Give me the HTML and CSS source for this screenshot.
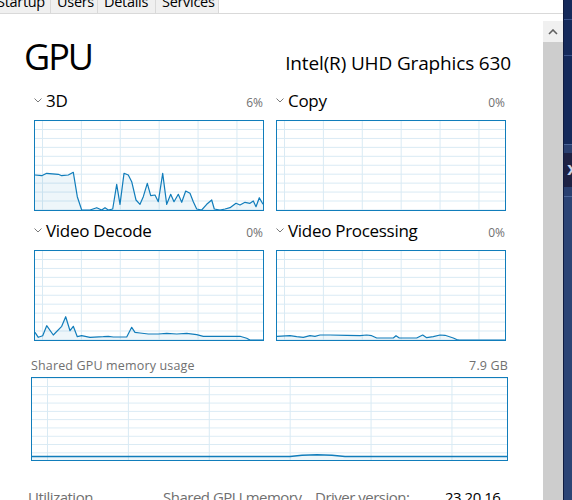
FILE: index.html
```html
<!DOCTYPE html>
<html>
  <head>
    <meta charset="UTF-8" />
    <title>Task Manager - GPU</title>
    <link rel="stylesheet" href="styles.css">
  </head>
  <body>
    <div class="window">
      <div class="main">
        <!-- Tab strip (scrolled partly out of view) -->
        <div class="tabs">
          <div class="tab tab-startup">Startup</div>
          <div class="tab tab-users">Users</div>
          <div class="tab tab-details">Details</div>
          <div class="tab tab-services">Services</div>
        </div>

        <div class="body">
          <div class="content">
            <div class="title-row">
              <h1 class="title">GPU</h1>
              <div class="gpu-name">Intel(R) UHD Graphics 630</div>
            </div>

            <div class="engines">
              <div class="engine">
                <div class="engine-head">
                  <span class="engine-name"><svg class="chev" width="8" height="5" viewBox="0 0 8 5"><polyline points="0.5,0.5 4,4 7.5,0.5" /></svg>3D</span>
                  <span class="pct">6%</span>
                </div>
                <div class="graph">
                  <svg width="228" height="89" viewBox="0 0 228 89">
                    <polygon class="area" points="0,54 6.7,54.7 11.7,52.3 23.3,53.3 26.7,54.7 33.3,54 38.3,51.3 42.3,75.7 46.7,89 55,89 61.7,86.7 66.7,89 70,86.7 73.3,89 77.7,88 81.7,63.3 85,83.3 89,52.3 93.3,54 96.7,60.7 101,79 105,83.3 108.3,75.7 112.3,62.3 115.7,74.7 120,74 123.3,80.7 127.7,52.3 131.7,83.3 135.7,73.3 139,80.7 143.3,73.3 146.7,81.3 150.7,70 155,72.3 158.3,80.7 161.7,88 166.7,89 171.7,83.3 176.7,79 179.3,88 185,89 190,88 195,86.7 201,82.3 205,84 210,81.3 215,82.3 218.3,80 221,85.7 224.3,76.7 228,83.3 228,89 0,89" />
                    <polyline class="line" points="0,54 6.7,54.7 11.7,52.3 23.3,53.3 26.7,54.7 33.3,54 38.3,51.3 42.3,75.7 46.7,89 55,89 61.7,86.7 66.7,89 70,86.7 73.3,89 77.7,88 81.7,63.3 85,83.3 89,52.3 93.3,54 96.7,60.7 101,79 105,83.3 108.3,75.7 112.3,62.3 115.7,74.7 120,74 123.3,80.7 127.7,52.3 131.7,83.3 135.7,73.3 139,80.7 143.3,73.3 146.7,81.3 150.7,70 155,72.3 158.3,80.7 161.7,88 166.7,89 171.7,83.3 176.7,79 179.3,88 185,89 190,88 195,86.7 201,82.3 205,84 210,81.3 215,82.3 218.3,80 221,85.7 224.3,76.7 228,83.3" />
                  </svg>
                </div>
              </div>

              <div class="engine">
                <div class="engine-head">
                  <span class="engine-name"><svg class="chev" width="8" height="5" viewBox="0 0 8 5"><polyline points="0.5,0.5 4,4 7.5,0.5" /></svg>Copy</span>
                  <span class="pct">0%</span>
                </div>
                <div class="graph"></div>
              </div>

              <div class="engine">
                <div class="engine-head">
                  <span class="engine-name"><svg class="chev" width="8" height="5" viewBox="0 0 8 5"><polyline points="0.5,0.5 4,4 7.5,0.5" /></svg>Video Decode</span>
                  <span class="pct">0%</span>
                </div>
                <div class="graph">
                  <svg width="228" height="89" viewBox="0 0 228 89">
                    <polygon class="area" points="0,81.3 3.3,86.3 7.7,84.7 11.7,74.7 18.3,84 26.7,75.3 30.7,65.7 35,79.7 38.3,75.3 42.3,85.7 46.7,84.7 55,86.3 68.3,85.7 73.3,85.3 78.3,86 91.7,86 96.7,76.3 100,81.3 105,82 113.3,83 123.3,83 131.7,82.3 141.7,83 151.7,82.3 161.7,83.7 168.3,85.3 185,85.3 205,85.3 211.7,87.3 215,89 228,89 0,89" />
                    <polyline class="line" points="0,81.3 3.3,86.3 7.7,84.7 11.7,74.7 18.3,84 26.7,75.3 30.7,65.7 35,79.7 38.3,75.3 42.3,85.7 46.7,84.7 55,86.3 68.3,85.7 73.3,85.3 78.3,86 91.7,86 96.7,76.3 100,81.3 105,82 113.3,83 123.3,83 131.7,82.3 141.7,83 151.7,82.3 161.7,83.7 168.3,85.3 185,85.3 205,85.3 211.7,87.3 215,89 228,89" />
                  </svg>
                </div>
              </div>

              <div class="engine">
                <div class="engine-head">
                  <span class="engine-name"><svg class="chev" width="8" height="5" viewBox="0 0 8 5"><polyline points="0.5,0.5 4,4 7.5,0.5" /></svg>Video Processing</span>
                  <span class="pct">0%</span>
                </div>
                <div class="graph">
                  <svg width="228" height="89" viewBox="0 0 228 89">
                    <polygon class="area" points="0,85.3 13,84.7 19.7,85.7 26.3,86.3 33,84.7 38,85.3 43,84 53,84 69.7,84.3 83,84.7 89.7,84 94.7,84.7 99.7,87 116.3,87 119,84.7 122.3,87 139.7,87 145.7,84 149.7,86.7 156.3,85.7 163,84 168,84.3 176.3,87 179.7,88.5 182,89 228,89 0,89" />
                    <polyline class="line" points="0,85.3 13,84.7 19.7,85.7 26.3,86.3 33,84.7 38,85.3 43,84 53,84 69.7,84.3 83,84.7 89.7,84 94.7,84.7 99.7,87 116.3,87 119,84.7 122.3,87 139.7,87 145.7,84 149.7,86.7 156.3,85.7 163,84 168,84.3 176.3,87 179.7,88.5 182,89 228,89" />
                  </svg>
                </div>
              </div>
            </div>

            <div class="shared">
              <div class="shared-head">
                <span>Shared GPU memory usage</span>
                <span>7.9 GB</span>
              </div>
              <div class="graph graph-wide">
                <svg width="475" height="82" viewBox="0 0 475 82">
                  <polygon class="area" points="0,78.5 258,78.5 270,77.3 285,76.8 300,77.3 313,78.5 475,78.5 475,82 0,82" />
                  <polyline class="line line-thick" points="0,78.5 258,78.5 270,77.3 285,76.8 300,77.3 313,78.5 475,78.5" />
                </svg>
              </div>
            </div>

            <div class="stats">
              <span class="stat-label stat-util">Utilization</span>
              <span class="stat-label stat-shared">Shared GPU memory</span>
              <span class="stat-label stat-driver">Driver version:</span>
              <span class="stat-value">23.20.16...</span>
            </div>
          </div>

          <!-- Vertical scrollbar -->
          <div class="scrollbar">
            <div class="scroll-up">
              <svg width="10" height="6" viewBox="0 0 10 6"><polyline points="1,5 5,1 9,5" /></svg>
            </div>
            <div class="scroll-thumb"></div>
          </div>
        </div>
      </div>

      <!-- Sliver of the desktop behind the window -->
      <div class="desktop">
        <span class="desktop-x">X</span>
      </div>
    </div>
  </body>
</html>
```

FILE: styles.css
```css
body {
  margin: 0;
  padding: 0;
  background-color: #ffffff;
  font-family: "Open Sans", "Noto Sans", sans-serif;
  color: #000000;
  overflow: hidden;
}

.window {
  display: flex;
  width: 572px;
  height: 500px;
  overflow: hidden;
}

.main {
  flex: 1;
  display: flex;
  flex-direction: column;
  min-width: 0;
}

/* Tabs */
.tabs {
  display: flex;
  height: 19px;
  margin-top: -6px;
  border-bottom: 1px solid #d9d9d9;
}

.tab {
  box-sizing: border-box;
  padding-left: 6px;
  font-size: 14.5px;
  line-height: 16px;
  color: #000000;
  background-color: #f0f0f0;
  border-right: 1px solid #d9d9d9;
  letter-spacing: -0.3px;
  white-space: nowrap;
  overflow: hidden;
}

.tab-startup {
  width: 51px;
  text-indent: -9px;
}

.tab-users {
  width: 47px;
}

.tab-details {
  width: 58px;
}

.tab-services {
  width: 63px;
}

/* Page body */
.body {
  flex: 1;
  display: flex;
  min-height: 0;
}

.content {
  flex: 1;
  min-width: 0;
}

.title-row {
  display: flex;
  justify-content: space-between;
  align-items: baseline;
  margin: 21px 32px 0 24px;
  height: 55px;
}

.title {
  margin: 0;
  font-size: 36px;
  font-weight: normal;
  line-height: 44px;
  letter-spacing: -2px;
}

.gpu-name {
  font-size: 19px;
  letter-spacing: -0.15px;
}

/* Engine graphs */
.engines {
  display: grid;
  grid-template-columns: 230px 230px;
  column-gap: 12px;
  row-gap: 9px;
  margin-left: 34px;
}

.engine-head {
  display: flex;
  justify-content: space-between;
  align-items: baseline;
  height: 22px;
  margin-bottom: 8px;
}

.engine-name {
  font-size: 17px;
  line-height: 22px;
  letter-spacing: -0.3px;
}

.chev {
  margin-right: 4px;
  vertical-align: 4px;
}

.chev polyline {
  fill: none;
  stroke: #7a7a7a;
  stroke-width: 1;
}

.pct {
  font-size: 12px;
  color: #707070;
  margin-right: 1px;
}

.graph {
  height: 89px;
  border: 1px solid #117dbb;
  background-color: #ffffff;
  background-image:
    linear-gradient(to right, #d9eaf4 1px, transparent 1px),
    linear-gradient(to bottom, #d9eaf4 1px, transparent 1px);
  background-size: 38.9px 8.95px;
  background-position: 7px 8px;
}

.graph svg {
  display: block;
}

.graph .area {
  fill: rgba(17, 125, 187, 0.07);
  stroke: none;
}

.graph .line {
  fill: none;
  stroke: #117dbb;
  stroke-width: 1.2;
  stroke-linejoin: round;
}

.graph .line-thick {
  stroke-width: 1.6;
}

/* Shared memory */
.shared {
  margin: 17px 0 0 31px;
  width: 477px;
}

.shared-head {
  display: flex;
  justify-content: space-between;
  font-size: 12.5px;
  line-height: 16px;
  color: #707070;
  margin-bottom: 3px;
  letter-spacing: 0.15px;
}

.graph-wide {
  height: 82px;
  background-size: 80.9px 8.3px;
  background-position: 15px 8px;
}

/* Bottom stats */
.stats {
  display: flex;
  margin: 26px 0 0 28px;
  height: 20px;
  font-size: 15px;
  line-height: 20px;
  letter-spacing: -0.5px;
  white-space: nowrap;
}

.stat-label {
  color: #707070;
}

.stat-util {
  width: 135px;
}

.stat-shared {
  width: 152px;
}

.stat-driver {
  width: 130px;
}

.stat-value {
  color: #000000;
}

/* Scrollbar */
.scrollbar {
  width: 20px;
  margin-top: 7px;
  display: flex;
  flex-direction: column;
}

.scroll-up {
  height: 21px;
  background-color: #f0f0f0;
  display: flex;
  align-items: center;
  justify-content: center;
}

.scroll-up polyline {
  fill: none;
  stroke: #606060;
  stroke-width: 1.6;
}

.scroll-thumb {
  flex: 1;
  background-color: #cdcdcd;
}

/* Desktop strip */
.desktop {
  width: 9px;
  flex-shrink: 0;
  padding-top: 162px;
  box-sizing: border-box;
  overflow: hidden;
  border-left: 1px solid #101c40;
  background: linear-gradient(to bottom,
    #152a5b 0, #152a5b 19px, #3a5289 19px, #3a5289 20px,
    #152a5b 20px, #152a5b 55px, #3a5289 55px, #3a5289 56px,
    #152a5b 56px, #152a5b 144px, #4a6496 144px, #4a6496 145px,
    #2a4070 145px, #2a4070 153px, #1e2244 153px, #1e2244 187px,
    #2a4070 187px, #2a4070 196px, #4a6496 196px, #4a6496 197px,
    #2c4475 197px, #2c4475 100%);
}

.desktop-x {
  display: block;
  margin-left: 3px;
  font-family: "DejaVu Sans", sans-serif;
  font-size: 14px;
  font-weight: bold;
  line-height: 16px;
  color: #c8d2e6;
}
```
